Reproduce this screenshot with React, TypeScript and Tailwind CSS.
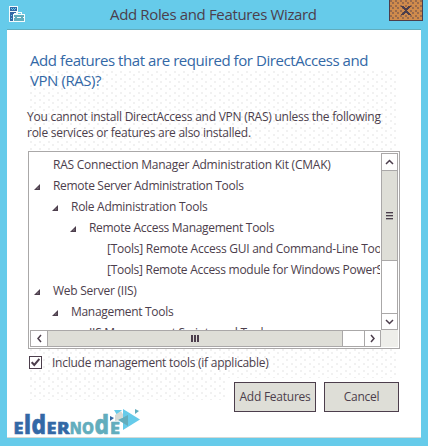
import React from "react";

type Row = { text: string; pad: string; arrow?: boolean; track: string };

const rows: Row[] = [
  { text: "RAS Connection Manager Administration Kit (CMAK)", pad: "pl-[6px]", track: "tracking-[-0.23px]" },
  { text: "Remote Server Administration Tools", pad: "pl-[6px]", arrow: true, track: "tracking-[-0.32px]" },
  { text: "Role Administration Tools", pad: "pl-[24px]", arrow: true, track: "tracking-[-0.28px]" },
  { text: "Remote Access Management Tools", pad: "pl-[42px]", arrow: true, track: "tracking-[-0.3px]" },
  { text: "[Tools] Remote Access GUI and Command-Line Tools", pad: "pl-[60px]", track: "tracking-[-0.25px]" },
  { text: "[Tools] Remote Access module for Windows PowerShell", pad: "pl-[60px]", track: "tracking-[-0.28px]" },
  { text: "Web Server (IIS)", pad: "pl-[6px]", arrow: true, track: "tracking-[-0.25px]" },
  { text: "Management Tools", pad: "pl-[24px]", arrow: true, track: "tracking-[-0.3px]" },
  { text: "IIS Management Scripts and Tools", pad: "pl-[42px]", track: "tracking-[-0.28px]" },
];

const dots =
  "bg-[radial-gradient(circle_at_1px_1px,#e0e0e0_0.6px,transparent_0.8px),radial-gradient(circle_at_5px_4px,#e0e0e0_0.6px,transparent_0.8px)] bg-[length:9px_7px]";

function Chevron({ d }: { d: string }) {
  return (
    <svg width="9" height="9" viewBox="0 0 9 9" fill="none" stroke="#4c3e4c" strokeWidth="1.5">
      <path d={d} />
    </svg>
  );
}

function ServerIcon() {
  return (
    <svg className="ml-[9px] mt-[6px] shrink-0" width="17" height="17" viewBox="0 0 17 17" shapeRendering="crispEdges">
      <path d="M0 0h9v8H6v8H0z" fill="#f4fbfd" />
      <path d="M1 1h7v4H1zM1 6h6v1H1zM1 7h4v1H1zM1 8h3v7H1z" fill="#3368a6" />
      <path d="M2 2h1v1H2zM4 2h1v1H4zM6 2h1v1H6zM3 3h1v1H3zM5 3h1v1H5zM2 9h1v1H2zM2 12h1v1H2z" fill="#66cbea" />
      <path d="M4 8h12v8H4z" fill="#f4fbfd" />
      <path d="M5 9h10v2H5zM5 12h10v3H5z" fill="#62adbd" />
      <path d="M7.500 8V6.500h5V8" fill="none" stroke="#f4fbfd" />
      <path d="M6 11h2v1H6zM12 11h2v1h-2z" fill="#62adbd" />
    </svg>
  );
}

function Logo() {
  return (
    <svg className="block shrink-0" width="128" height="29" viewBox="0 0 128 29">
      <g fontFamily="'Noto Sans', 'Open Sans', sans-serif" fontWeight="800" strokeWidth="0.7">
        <g fill="#3368a6" stroke="#3368a6">
          <text x="0.500" y="25" fontSize="16.500" textLength="10" lengthAdjust="spacingAndGlyphs">E</text>
          <text x="11" y="25" fontSize="26" textLength="7" lengthAdjust="spacingAndGlyphs">l</text>
          <text x="18.500" y="25" fontSize="26" textLength="14.500" lengthAdjust="spacingAndGlyphs">d</text>
          <text x="33.500" y="25" fontSize="16.500" textLength="10" lengthAdjust="spacingAndGlyphs">E</text>
          <text x="44" y="25" fontSize="16.500" textLength="12.500" lengthAdjust="spacingAndGlyphs">R</text>
        </g>
        <g fill="#62adbd" stroke="#62adbd">
          <text x="56.800" y="25" fontSize="16.500" textLength="12" lengthAdjust="spacingAndGlyphs">N</text>
          <text x="69" y="25" fontSize="16.500" textLength="12" lengthAdjust="spacingAndGlyphs">O</text>
          <text x="81.500" y="25" fontSize="26" textLength="14.500" lengthAdjust="spacingAndGlyphs">d</text>
          <text x="97" y="25" fontSize="16.500" textLength="10" lengthAdjust="spacingAndGlyphs">E</text>
        </g>
      </g>
      <path d="M97 7l4 2-4 3z" fill="#3368a6" />
      <path d="M101 1h8l-5 5z" fill="#66cbea" />
      <path d="M102 6l6-4 3 5-4 4-5 1z" fill="#d5dad6" />
      <path d="M110 0l17 10.500-17 10.500z" fill="#66cbea" />
      <path d="M105 11l10-5v11z" fill="#62adbd" />
      <path d="M122 0l4 2-4 3z" fill="#62adbd" />
    </svg>
  );
}

export default function App() {
  return (
    <div className="flex h-[446px] w-[428px] flex-col overflow-hidden bg-[#66cbea] font-['Open_Sans','Noto_Sans',sans-serif] text-[12px] whitespace-nowrap text-[#4c3e4c]">
      <header className="flex h-[29px] shrink-0 items-start">
        <ServerIcon />
        <h1 className="ml-[84px] w-[279px] text-[15px] leading-[29px] tracking-[-0.35px]">Add Roles and Features Wizard</h1>
        <button className="flex h-[21px] w-[34px] items-center justify-center border border-t-0 border-[#4c3e4c] bg-[#d08b4c] bg-[radial-gradient(circle_at_1px_1px,#5b444a_0.6px,transparent_0.8px),radial-gradient(circle_at_3px_3px,#5b444a_0.6px,transparent_0.8px)] bg-[length:5px_5px]">
          <svg width="10" height="9" viewBox="0 0 10 9" shapeRendering="crispEdges">
            <path d="M0 0h3v1h1v1h2V1h1V0h3v1H9v1H8v1H7v1H6v1h1v1h1v1h1v1h1v1H7V8H6V7H4v1H3v1H0V8h1V7h1V6h1V5h1V4H3V3H2V2H1V1H0z" fill="#4c3e4c" />
          </svg>
        </button>
      </header>

      <main className="mx-[7px] flex h-[409px] shrink-0 flex-col border-t border-t-[#62adbd] border-b border-b-[#d5dad6] bg-white">
        <div className={`ml-[23px] mt-[20px] h-[101px] w-[369px] shrink-0 ${dots}`}>
          <h2 className="text-[15px] leading-[20px] tracking-[-0.43px] text-[#3368a6]">
            <span className="block bg-white">Add features that are required for DirectAccess and</span>
            <span className="block">VPN (RAS)?</span>
          </h2>
          <p className="-ml-[3px] mt-[19px] leading-[16px] tracking-[-0.25px]">
            <span className="block">You cannot install DirectAccess and VPN (RAS) unless the following</span>
            <span className="block">role services or features are also installed.</span>
          </p>
        </div>

        <section className="ml-[21px] flex h-[198px] w-[372px] shrink-0 flex-col border border-[#aaa8a8] bg-white p-px">
          <div className="flex h-[177px]">
            <div className="w-[350px] overflow-hidden pt-[1px]">
              {rows.map((row) => (
                <div key={row.text} className={`flex h-[21px] items-center ${row.pad}`}>
                  <span className="flex w-[17px] shrink-0">
                    {row.arrow && (
                      <svg className="-ml-[2px] mt-[2px]" width="6" height="6" viewBox="0 0 6 6">
                        <path d="M6 0v6H0z" fill="#4c3e4c" />
                        <path d="M4.4 3v1.5H3z" fill="#aaa0a8" />
                      </svg>
                    )}
                  </span>
                  <span className={row.track}>{row.text}</span>
                </div>
              ))}
            </div>
            <div className="ml-px flex w-[17px] shrink-0 flex-col border border-[#aaa8a8]">
              <div className="flex h-[16px] items-center justify-center"><Chevron d="M1 6l3.5-3.5L8 6" /></div>
              <div className="flex h-[91px] items-center justify-center border-y border-[#aaa8a8] bg-[#deded7]">
                <div className="h-[8px] w-[7px] bg-[repeating-linear-gradient(#4c3e4c_0_1px,#a8a8a6_1px_2px,#deded7_2px_3px)]" />
              </div>
              <div className="h-[53px] border-b border-[#aaa8a8]" />
              <div className="flex h-[15px] items-center justify-center"><Chevron d="M1 3l3.5 3.5L8 3" /></div>
            </div>
          </div>
          <div className="flex h-[17px] shrink-0">
            <div className="flex w-[351px] border border-[#aaa8a8]">
              <div className="flex w-[16px] items-center justify-center"><Chevron d="M6 1L3 4.5 6 8" /></div>
              <div className="flex w-[296px] items-center justify-center border-x border-[#aaa8a8] bg-[#deded7]">
                <div className="h-[7px] w-[8px] bg-[repeating-linear-gradient(90deg,#4c3e4c_0_2px,#deded7_2px_3px)]" />
              </div>
              <div className="w-[21px]" />
              <div className="flex w-[16px] items-center justify-center border-l border-[#aaa8a8]"><Chevron d="M3 1l3 3.5L3 8" /></div>
            </div>
            <div className="w-[17px] bg-[#eeeeea]" />
          </div>
        </section>

        <div className="flex h-[87px] shrink-0 flex-col">
          <div className={`ml-[23px] flex h-[29px] w-[369px] shrink-0 items-start ${dots}`}>
            <div className="-ml-px mt-[7px] flex size-[13px] items-center justify-center border border-[#4c3e4c] bg-white">
              <svg width="9" height="9" viewBox="0 0 9 9" fill="none" stroke="#4c3e4c" strokeWidth="2">
                <path d="M0.7 4.2L3.3 7 8.4 1" />
              </svg>
            </div>
            <span className="ml-[10px] mt-[7px] leading-[14px] tracking-[-0.25px]">Include management tools (if applicable)</span>
          </div>
          <div className="flex items-start">
            <div className="flex h-[58px] w-[227px] flex-col">
              <div className={`ml-[23px] h-[22px] w-[196px] shrink-0 ${dots}`} />
              <div className="ml-[6px] mt-[9px]"><Logo /></div>
            </div>
            <div className="mt-[4px] flex gap-[8px]">
              <button className="h-[30px] w-[82px] border border-[#4c3e4c] bg-[#deded7] pb-px tracking-[-0.25px]">Add Features</button>
              <button className="h-[30px] w-[75px] border border-[#4c3e4c] bg-[#deded7] pb-px tracking-[-0.3px]">Cancel</button>
            </div>
          </div>
        </div>
      </main>
    </div>
  );
}
